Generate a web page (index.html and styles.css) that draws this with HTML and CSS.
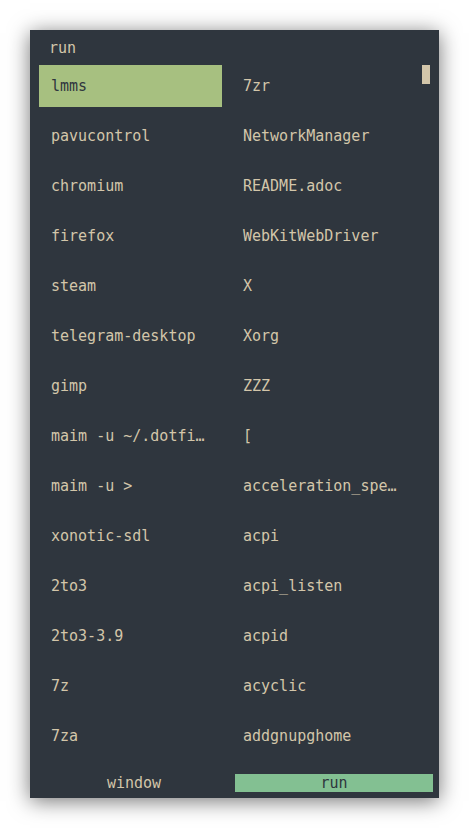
FILE: index.html
```html
<!DOCTYPE html>
<html>
<head>
<meta charset="utf-8">
<link rel="stylesheet" href="styles.css">
</head>
<body>
<div class="panel">
  <div class="prompt">run</div>
  <div class="main">
    <div class="list">
      <div class="item selected">lmms</div>
      <div class="item">pavucontrol</div>
      <div class="item">chromium</div>
      <div class="item">firefox</div>
      <div class="item">steam</div>
      <div class="item">telegram-desktop</div>
      <div class="item">gimp</div>
      <div class="item">maim -u ~/.dotfi…</div>
      <div class="item">maim -u &gt;</div>
      <div class="item">xonotic-sdl</div>
      <div class="item">2to3</div>
      <div class="item">2to3-3.9</div>
      <div class="item">7z</div>
      <div class="item">7za</div>
      <div class="item">7zr</div>
      <div class="item">NetworkManager</div>
      <div class="item">README.adoc</div>
      <div class="item">WebKitWebDriver</div>
      <div class="item">X</div>
      <div class="item">Xorg</div>
      <div class="item">ZZZ</div>
      <div class="item">[</div>
      <div class="item">acceleration_spe…</div>
      <div class="item">acpi</div>
      <div class="item">acpi_listen</div>
      <div class="item">acpid</div>
      <div class="item">acyclic</div>
      <div class="item">addgnupghome</div>
    </div>
    <div class="scrollbar"><div class="handle"></div></div>
  </div>
  <div class="modes">
    <div class="mode">window</div>
    <div class="mode active">run</div>
  </div>
</div>
</body>
</html>
```
FILE: styles.css
```css
html, body {
  margin: 0;
  padding: 0;
  background: #ffffff;
}
body {
  padding: 30px;
  font-family: "DejaVu Sans Mono", monospace;
  font-size: 15px;
}
.panel {
  width: 409px;
  height: 768px;
  background: #2f363e;
  color: #d3c6aa;
  box-shadow: 0 3px 20px rgba(0, 0, 0, 0.55);
  display: flex;
  flex-direction: column;
}
.prompt {
  height: 34px;
  padding-top: 1px;
  line-height: 35px;
  padding-left: 19px;
}
.main {
  display: flex;
  padding-left: 9px;
}
.list {
  display: grid;
  grid-template-columns: 183px 183px;
  grid-template-rows: repeat(14, 42px);
  grid-auto-flow: column;
  column-gap: 9px;
  row-gap: 8px;
}
.item {
  line-height: 42px;
  padding-left: 12px;
  white-space: nowrap;
  overflow: hidden;
}
.item.selected {
  background: #a7c080;
  color: #2f363e;
}
.scrollbar {
  margin-left: 8px;
  width: 8px;
}
.handle {
  height: 19px;
  background: #d3c6aa;
}
.modes {
  display: flex;
  gap: 2px;
  margin: 17px 6px 0 5px;
}
.mode {
  flex: 1;
  height: 18px;
  line-height: 18px;
  text-align: center;
}
.mode.active {
  background: #83c092;
  color: #2f363e;
}
```
